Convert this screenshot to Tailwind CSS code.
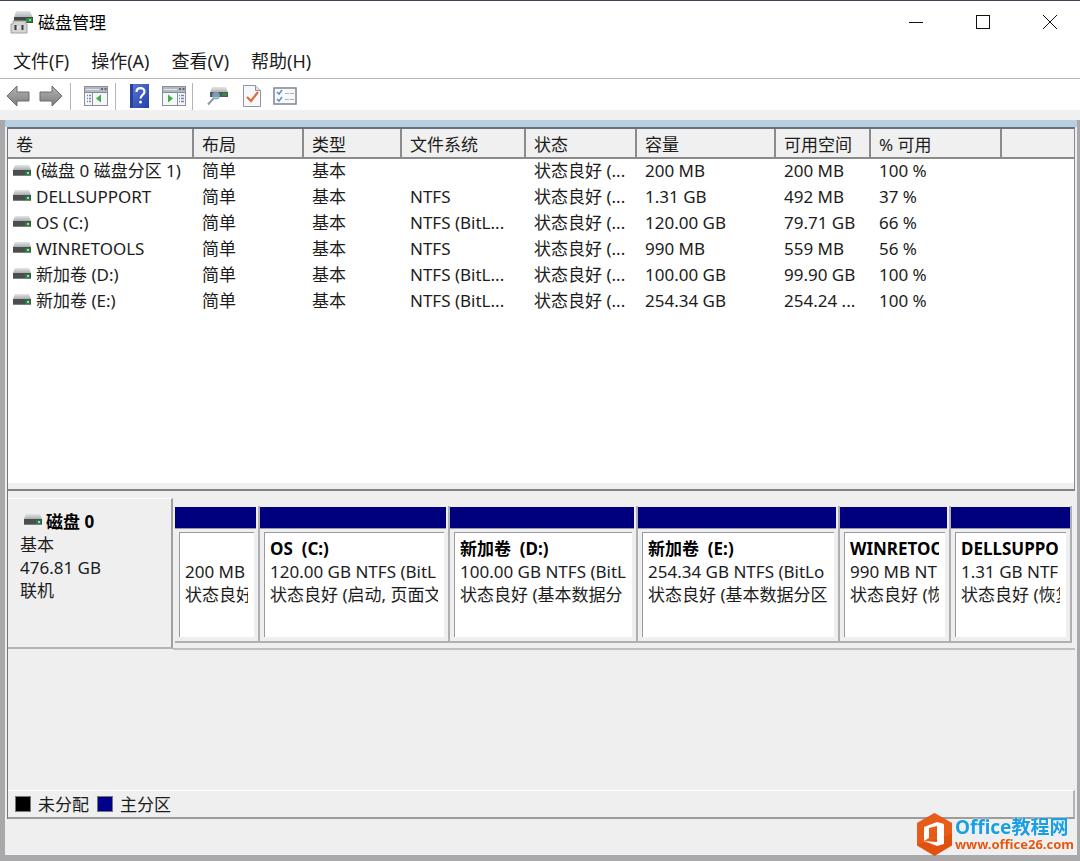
<!DOCTYPE html>
<html lang="zh-CN">
<head>
<meta charset="utf-8">
<title>磁盘管理</title>
<meta name="viewport" content="width=device-width, initial-scale=1">
<script src="https://cdn.jsdelivr.net/npm/@tailwindcss/browser@4"></script>
</head>
<body class="font-['Noto_Sans','Noto_Sans_CJK_SC',sans-serif] text-[17px] leading-[23px] text-[#1c1c1c]">
<svg class="absolute size-0" aria-hidden="true">
  <defs>
    <linearGradient id="metal" x1="0" y1="0" x2="0" y2="1"><stop offset="0" stop-color="#e4e6e6"/><stop offset="1" stop-color="#a9adad"/></linearGradient>
    <linearGradient id="arrow" x1="0" y1="0" x2="0" y2="1"><stop offset="0" stop-color="#b4b4b4"/><stop offset="1" stop-color="#7c7c7c"/></linearGradient>
    <linearGradient id="book" x1="0" y1="0" x2="1" y2="1"><stop offset="0" stop-color="#5b78d8"/><stop offset="1" stop-color="#2341a8"/></linearGradient>
    <symbol id="drive" viewBox="0 0 20 12">
      <path d="M3 0h14l2 5H1z" fill="url(#metal)"/>
      <rect x="1" y="5" width="18" height="6" fill="#4a4f4d"/>
      <rect x="1" y="10" width="18" height="1" fill="#7b7f7d"/>
      <rect x="13" y="6" width="5" height="4" fill="#2e7a45"/>
      <rect x="15" y="7" width="2" height="2" fill="#7ff0a0"/>
    </symbol>
    <symbol id="arrow-left" viewBox="0 0 24 22">
      <path d="M1 11 11 1v6h12v9H11v5z" fill="url(#arrow)" stroke="#6c6c6c" stroke-linejoin="round"/>
    </symbol>
    <symbol id="pane" viewBox="0 0 24 20">
      <rect x=".5" y=".5" width="23" height="19" fill="#f4f6f8" stroke="#8c9096"/>
      <rect x="1" y="1" width="22" height="5" fill="#b3b9c4"/>
      <path d="M2 3.500h13" stroke="#e2e5ec"/><path d="M17 3h2m1.500 0h2" stroke="#5f6878" stroke-width="2"/>
      <path d="M1 6.500h22" stroke="#868c96"/>
    </symbol>
  </defs>
</svg>

<div class="flex min-h-screen flex-col border-t border-[#3c4450] bg-white">
  <header class="flex h-[42px] items-center pl-[10px]">
    <svg class="h-7 w-6" viewBox="0 0 24 28" aria-hidden="true">
      <path d="M6 3h14l3 7H4z" fill="url(#metal)"/>
      <rect x="4" y="9" width="19" height="6" fill="#444a47"/>
      <rect x="16" y="10" width="6" height="4" fill="#2f8a40"/><rect x="19" y="11" width="2" height="2" fill="#74e284"/>
      <path d="M3 13h13v3h1v9H1v-9h2z" fill="#d4d4d2" stroke="#a2a2a0"/>
      <path d="M5.500 17v5M12.500 17v5" stroke="#3e3e3e" stroke-width="2"/><path d="M8 18v3" stroke="#f4f4f4"/>
    </svg>
    <h1 class="ml-1 flex-1 text-black">磁盘管理</h1>
    <div class="flex h-full gap-[7px]">
      <button aria-label="最小化" class="flex w-[60px] items-center justify-center"><svg class="size-4" viewBox="0 0 16 16"><path d="M1 8.500h14" stroke="#111"/></svg></button>
      <button aria-label="最大化" class="flex w-[60px] items-center justify-center"><svg class="size-4" viewBox="0 0 16 16"><rect x="1.500" y="1.500" width="13" height="13" fill="none" stroke="#111"/></svg></button>
      <button aria-label="关闭" class="flex w-[60px] items-center justify-center"><svg class="size-4" viewBox="0 0 16 16"><path d="M1 1l14 14M15 1 1 15" stroke="#111"/></svg></button>
    </div>
  </header>

  <nav class="flex h-9 items-center gap-[22px] border-b border-[#b9b9b9] pt-[2px] pl-[13px] text-[18px]">
    <button>文件(F)</button><button>操作(A)</button><button>查看(V)</button><button>帮助(H)</button>
  </nav>

  <div class="flex h-[31px] items-center pt-[3px] pl-[6px]" role="toolbar">
    <button aria-label="后退"><svg class="h-[22px] w-6"><use href="#arrow-left"/></svg></button>
    <button aria-label="前进" class="ml-[9px]"><svg class="h-[22px] w-6 -scale-x-100"><use href="#arrow-left"/></svg></button>
    <span class="ml-[7px] h-[27px] w-px bg-[#b5b5b5]"></span>
    <button aria-label="显示控制台树" class="ml-[13px]"><svg class="h-5 w-6" viewBox="0 0 24 20">
      <use href="#pane" width="24" height="20"/><path d="M8.500 7v12" stroke="#8c9096"/><path d="M3 9.500h4M3 12.500h4M3 15.500h4" stroke="#6f87b5" stroke-width="1.500" stroke-dasharray="1 1 2"/><path d="M17 8.500v8L12 12.500z" fill="#3fae49"/></svg></button>
    <span class="ml-[7px] h-[27px] w-px bg-[#b5b5b5]"></span>
    <button aria-label="帮助" class="ml-[14px]"><svg class="h-6 w-[19px]" viewBox="0 0 19 24">
      <rect width="19" height="24" fill="url(#book)"/><path d="M1.500 0v24" stroke="#29429a" stroke-width="3"/><path d="M6.500 8c0-5 8-5 8-.5 0 3.500-4 3.500-4 7" fill="none" stroke="#fff" stroke-width="2.200"/><circle cx="10.500" cy="18" r="1.500" fill="#fff"/></svg></button>
    <button aria-label="显示操作窗格" class="ml-[13px]"><svg class="h-5 w-6" viewBox="0 0 24 20">
      <use href="#pane" width="24" height="20"/><path d="M15.500 7v12" stroke="#8c9096"/><path d="M17 9.500h5M17 12.500h5M17 15.500h5" stroke="#6f87b5" stroke-width="1.500" stroke-dasharray="1 1 3"/><path d="M6 8.500v8l5-4z" fill="#3fae49"/></svg></button>
    <span class="ml-[6px] h-[27px] w-px bg-[#b5b5b5]"></span>
    <button aria-label="重新扫描磁盘" class="ml-[14px]"><svg class="h-5 w-[22px]" viewBox="0 0 22 20">
      <path d="M5 1h14l2 6H3z" fill="url(#metal)"/><rect x="3" y="6" width="18" height="5" fill="#4d5a58"/><rect x="15" y="7" width="5" height="3" fill="#2f8a48"/>
      <circle cx="9" cy="9.500" r="3.500" fill="#8fbcd8" fill-opacity=".7" stroke="#7795a8"/><path d="M6.500 12.500 1 18.500" stroke="#8a99a6" stroke-width="2"/></svg></button>
    <button aria-label="属性" class="ml-[14px]"><svg class="h-6 w-[18px]" viewBox="0 0 18 24">
      <path d="M.5 1.500h12l5 5v16H.5z" fill="#f7f8fa" stroke="#8d93a0"/><path d="M12.500 1.500v5h5" fill="#dfe3ea" stroke="#8d93a0"/><path d="M4 13l4 4 7-9" fill="none" stroke="#e06a42" stroke-width="2.200"/></svg></button>
    <button aria-label="列表" class="ml-[12px]"><svg class="h-[18px] w-6" viewBox="0 0 24 18">
      <rect x="1" y="1" width="22" height="16" fill="#f8f9fb" stroke="#7e8492" stroke-width="1.500"/><path d="M4 5l2 2 3-4M4 12l2 2 3-4" fill="none" stroke="#5294cf" stroke-width="1.500"/><path d="M12 6.500h4m1 0h4M12 12.500h4m1 0h4" stroke="#b0b0b0"/></svg></button>
  </div>
  <div class="h-[10px] bg-[#f0f0f0]"></div>

  <div class="flex flex-1 flex-col border-r-[3px] border-b-[6px] border-l-[5px] border-[#a9a9ab] bg-[#efeff0]">
    <div class="h-[7px] bg-[#b8cfe2]"></div>
    <main class="mr-[2px] ml-[2px] flex flex-1 flex-col border-l border-[#77777a]">
      <section class="h-[364px] border-t-2 border-r border-b-2 border-t-[#68707a] border-r-[#8a8a8a] border-b-[#828282] bg-white">
        <div class="h-[354px] overflow-hidden">
        <table class="w-full table-fixed border-collapse text-left whitespace-nowrap">
          <colgroup><col class="w-[185px]"><col class="w-[110px]"><col class="w-[98px]"><col class="w-[124px]"><col class="w-[111px]"><col class="w-[139px]"><col class="w-[95px]"><col class="w-[131px]"><col></colgroup>
          <thead class="bg-[#f0f0f0]">
            <tr class="h-[29px] border-b-2 border-[#8b8b8b] *:border-r-2 *:border-[#8b8b8b] *:pt-[2px] *:pl-2 *:font-normal">
              <th>卷</th><th>布局</th><th>类型</th><th>文件系统</th><th>状态</th><th>容量</th><th>可用空间</th><th>% 可用</th><th class="border-r-0!" aria-label="其他"></th>
            </tr>
          </thead>
          <tbody class="[&_td]:overflow-hidden [&_td]:pb-[2px] [&_td]:pl-[9px] [&_tr]:h-[26px]">
            <tr><td class="pl-1!"><span class="flex items-center gap-1"><svg class="h-3 w-5 shrink-0"><use href="#drive"/></svg>(磁盘 0 磁盘分区 1)</span></td><td>简单</td><td>基本</td><td></td><td>状态良好 (...</td><td>200 MB</td><td>200 MB</td><td>100 %</td><td></td></tr>
            <tr><td class="pl-1!"><span class="flex items-center gap-1"><svg class="h-3 w-5 shrink-0"><use href="#drive"/></svg>DELLSUPPORT</span></td><td>简单</td><td>基本</td><td>NTFS</td><td>状态良好 (...</td><td>1.31 GB</td><td>492 MB</td><td>37 %</td><td></td></tr>
            <tr><td class="pl-1!"><span class="flex items-center gap-1"><svg class="h-3 w-5 shrink-0"><use href="#drive"/></svg>OS (C:)</span></td><td>简单</td><td>基本</td><td>NTFS (BitL...</td><td>状态良好 (...</td><td>120.00 GB</td><td>79.71 GB</td><td>66 %</td><td></td></tr>
            <tr><td class="pl-1!"><span class="flex items-center gap-1"><svg class="h-3 w-5 shrink-0"><use href="#drive"/></svg>WINRETOOLS</span></td><td>简单</td><td>基本</td><td>NTFS</td><td>状态良好 (...</td><td>990 MB</td><td>559 MB</td><td>56 %</td><td></td></tr>
            <tr><td class="pl-1!"><span class="flex items-center gap-1"><svg class="h-3 w-5 shrink-0"><use href="#drive"/></svg>新加卷 (D:)</span></td><td>简单</td><td>基本</td><td>NTFS (BitL...</td><td>状态良好 (...</td><td>100.00 GB</td><td>99.90 GB</td><td>100 %</td><td></td></tr>
            <tr><td class="pl-1!"><span class="flex items-center gap-1"><svg class="h-3 w-5 shrink-0"><use href="#drive"/></svg>新加卷 (E:)</span></td><td>简单</td><td>基本</td><td>NTFS (BitL...</td><td>状态良好 (...</td><td>254.34 GB</td><td>254.24 ...</td><td>100 %</td><td></td></tr>
          </tbody>
        </table>
        </div>
        <div class="h-[6px] bg-[#efeff0]"></div>
      </section>

      <section class="mt-[7px] flex">
        <div class="h-[151px] w-[165px] shrink-0 border-t border-r-2 border-b-2 border-t-white border-r-[#a0a0a0] border-b-[#b4b4b4] pt-[11px] pl-3">
          <h2 class="flex items-center gap-[3px] pl-[3px] font-bold text-black"><svg class="mb-1 h-3 w-5"><use href="#drive"/></svg>磁盘 0</h2>
          <p>基本</p><p>476.81 GB</p><p>联机</p>
        </div>
        <div class="grid flex-1 grid-cols-[85fr_190fr_188fr_202fr_111fr_121fr] self-start border-b-2 border-[#c0c0c0] pt-2 pr-[3px] pb-[5px] pl-[2px] whitespace-nowrap *:min-w-0 *:border-r-2 *:border-b-2 *:border-[#b0b0b4]">
          <article>
            <div class="mt-px mr-[2px] h-[22px] border-b border-[#9a9aa4] bg-[#00007f]"></div>
            <div class="mx-1 mt-[3px] mb-1 h-[105px] border-t border-l border-[#9a9a9e] bg-white py-1 pr-[6px] pl-[5px]"><div class="overflow-hidden"><h3 class="h-[23px]"></h3><p>200 MB</p><p>状态良好</p></div></div>
          </article>
          <article>
            <div class="mt-px mr-[2px] h-[22px] border-b border-[#9a9aa4] bg-[#00007f]"></div>
            <div class="mx-1 mt-[3px] mb-1 h-[105px] border-t border-l border-[#9a9a9e] bg-white py-1 pr-[6px] pl-[5px]"><div class="overflow-hidden"><h3 class="font-bold whitespace-pre text-black">OS  (C:)</h3><p>120.00 GB NTFS (BitL</p><p>状态良好 (启动, 页面文</p></div></div>
          </article>
          <article>
            <div class="mt-px mr-[2px] h-[22px] border-b border-[#9a9aa4] bg-[#00007f]"></div>
            <div class="mx-1 mt-[3px] mb-1 h-[105px] border-t border-l border-[#9a9a9e] bg-white py-1 pr-[6px] pl-[5px]"><div class="overflow-hidden"><h3 class="font-bold whitespace-pre text-black">新加卷  (D:)</h3><p>100.00 GB NTFS (BitL</p><p>状态良好 (基本数据分</p></div></div>
          </article>
          <article>
            <div class="mt-px mr-[2px] h-[22px] border-b border-[#9a9aa4] bg-[#00007f]"></div>
            <div class="mx-1 mt-[3px] mb-1 h-[105px] border-t border-l border-[#9a9a9e] bg-white py-1 pr-[6px] pl-[5px]"><div class="overflow-hidden"><h3 class="font-bold whitespace-pre text-black">新加卷  (E:)</h3><p>254.34 GB NTFS (BitLo</p><p>状态良好 (基本数据分区</p></div></div>
          </article>
          <article>
            <div class="mt-px mr-[2px] h-[22px] border-b border-[#9a9aa4] bg-[#00007f]"></div>
            <div class="mx-1 mt-[3px] mb-1 h-[105px] border-t border-l border-[#9a9a9e] bg-white py-1 pr-[6px] pl-[5px]"><div class="overflow-hidden"><h3 class="font-bold text-black">WINRETOO</h3><p>990 MB NT</p><p>状态良好 (恢</p></div></div>
          </article>
          <article>
            <div class="mt-px h-[22px] border-b border-[#9a9aa4] bg-[#00007f]"></div>
            <div class="mx-1 mt-[3px] mb-1 h-[105px] border-t border-l border-[#9a9a9e] bg-white py-1 pr-[6px] pl-[5px]"><div class="overflow-hidden"><h3 class="font-bold text-black">DELLSUPPO</h3><p>1.31 GB NTF</p><p>状态良好 (恢复</p></div></div>
          </article>
        </div>
      </section>

      <footer class="mt-auto flex h-[29px] items-center border-t border-r-2 border-b-2 border-t-white border-r-[#b4b4b4] border-b-[#9c9c9c] pl-[7px]">
        <span class="size-4 border border-[#777] bg-black"></span><span class="ml-[7px]">未分配</span>
        <span class="ml-2 size-4 border border-[#777] bg-[#00008b]"></span><span class="ml-[7px]">主分区</span>
      </footer>
    </main>
    <div class="h-9"></div>
  </div>
</div>

<!-- Site badge floating over the window corner -->
<a href="#" class="fixed right-[6px] bottom-[5px] flex items-center gap-[2px] font-bold whitespace-nowrap">
  <svg class="h-[43px] w-[37px]" viewBox="0 0 37 43" aria-hidden="true">
    <path d="M18.500 0 36 10v22.500L18.500 43 1 32.500V10z" fill="#e2500f"/>
    <path d="M1 10 18.500 0 36 10v11L1 32z" fill="#ee6a25" fill-opacity=".45"/>
    <path fill-rule="evenodd" d="M8 14 21 9l7 2v20l-7 2-13-5 13 1V13l-8 2v10l-5 3z" fill="#fff"/>
  </svg>
  <span class="block">
    <span class="block text-[19px] leading-[20px] text-[#1a9fe3] [text-shadow:0_0_2px_#fff]">Office教程网</span>
    <span class="block text-[13px] leading-[15px] text-[#e8550f] [text-shadow:0_0_2px_#fff]">www.office26.com</span>
  </span>
</a>
</body>
</html>
